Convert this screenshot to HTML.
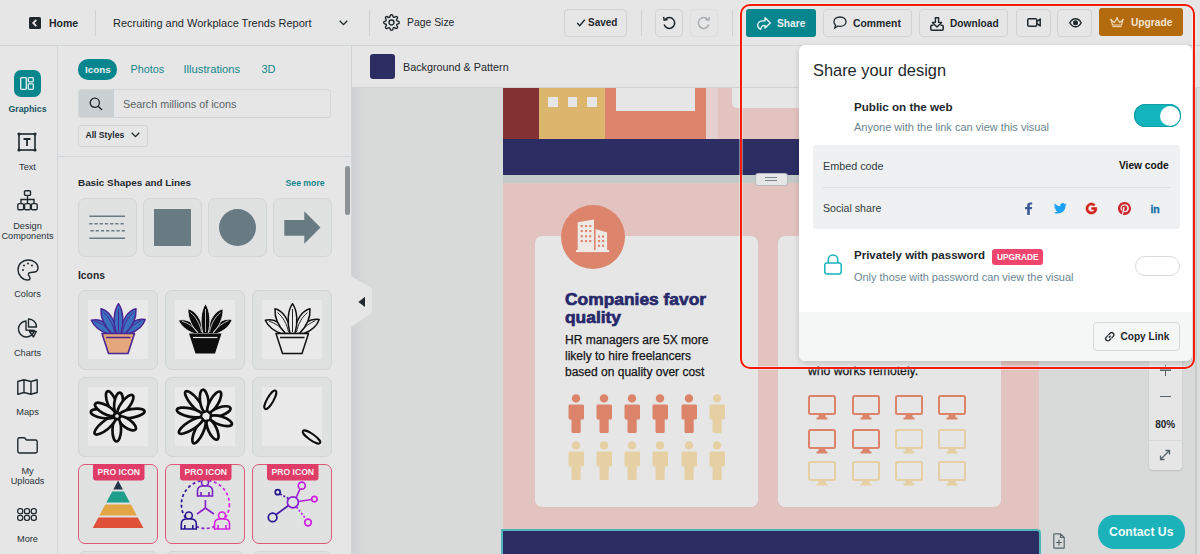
<!DOCTYPE html>
<html><head><meta charset="utf-8">
<style>
*{box-sizing:border-box;margin:0;padding:0}
html,body{width:1200px;height:554px;overflow:hidden;background:#e6e6e6;font-family:"Liberation Sans",sans-serif;color:#1e282d}
.a{position:absolute}
.t{position:absolute;white-space:nowrap;line-height:1}
.b{font-weight:700}
svg{position:absolute;overflow:visible}
.btn{position:absolute;border:1px solid #d0d3d5;border-radius:4px;background:#e6e6e6}
</style></head><body>

<!-- HEADER -->
<div class="a" style="left:0;top:0;width:1200px;height:46px;background:#e6e6e6;border-bottom:1px solid #cfd4d6"></div>
<svg style="left:29px;top:17px" width="12" height="12" viewBox="0 0 12 12"><rect width="12" height="12" rx="1.5" fill="#1e282d"/><path d="M7.3 2.8 L4.2 6 L7.3 9.2" stroke="#e6e6e6" stroke-width="1.8" fill="none"/></svg>
<div class="t b" style="left:49px;top:18px;font-size:10.5px">Home</div>
<div class="a" style="left:95px;top:10px;width:1px;height:26px;background:#d0d3d5"></div>
<div class="t" style="left:113px;top:18px;font-size:11px">Recruiting and Workplace Trends Report</div>
<svg style="left:339px;top:20px" width="9" height="6" viewBox="0 0 9 6"><path d="M0.7 0.7 L4.5 4.6 L8.3 0.7" stroke="#1e282d" stroke-width="1.3" fill="none"/></svg>
<div class="a" style="left:369px;top:10px;width:1px;height:26px;background:#d0d3d5"></div>
<svg style="left:383px;top:14px" width="17" height="17" viewBox="0 0 24 24"><path fill="none" stroke="#1e282d" stroke-width="2" d="M12 15.5a3.5 3.5 0 1 0 0-7 3.5 3.5 0 0 0 0 7z"/><path fill="none" stroke="#1e282d" stroke-width="2" d="M19.4 15a1.7 1.7 0 0 0 .3 1.8l.1.1a2 2 0 1 1-2.8 2.8l-.1-.1a1.7 1.7 0 0 0-1.8-.3 1.7 1.7 0 0 0-1 1.5V21a2 2 0 1 1-4 0v-.1a1.7 1.7 0 0 0-1.1-1.5 1.7 1.7 0 0 0-1.8.3l-.1.1a2 2 0 1 1-2.8-2.8l.1-.1a1.7 1.7 0 0 0 .3-1.8 1.7 1.7 0 0 0-1.5-1H3a2 2 0 1 1 0-4h.1a1.7 1.7 0 0 0 1.5-1.1 1.7 1.7 0 0 0-.3-1.8l-.1-.1a2 2 0 1 1 2.8-2.8l.1.1a1.7 1.7 0 0 0 1.8.3H9a1.7 1.7 0 0 0 1-1.5V3a2 2 0 1 1 4 0v.1a1.7 1.7 0 0 0 1 1.5 1.7 1.7 0 0 0 1.8-.3l.1-.1a2 2 0 1 1 2.8 2.8l-.1.1a1.7 1.7 0 0 0-.3 1.8V9a1.7 1.7 0 0 0 1.5 1H21a2 2 0 1 1 0 4h-.1a1.7 1.7 0 0 0-1.5 1z"/></svg>
<div class="t" style="left:407px;top:18px;font-size:10.4px">Page Size</div>

<div class="btn" style="left:564px;top:9px;width:63px;height:28px"></div>
<svg style="left:576px;top:19.3px" width="10" height="8" viewBox="0 0 10 9"><path d="M0.8 4.6 L3.6 7.6 L9.2 0.8" stroke="#1e282d" stroke-width="1.6" fill="none"/></svg>
<div class="t b" style="left:588px;top:18.4px;font-size:10px">Saved</div>
<div class="a" style="left:641px;top:10px;width:1px;height:26px;background:#d0d3d5"></div>
<div class="btn" style="left:655px;top:9px;width:28px;height:28px"></div>
<svg style="left:661px;top:15px" width="16" height="16" viewBox="0 0 16 16"><path d="M4.2 4.4 A5.4 5.4 0 1 1 3.1 9.6" stroke="#1e282d" stroke-width="1.5" fill="none"/><path d="M2.6 1.8 L3.2 5.2 L6.6 4.6" stroke="#1e282d" stroke-width="1.5" fill="none"/></svg>
<div class="btn" style="left:690px;top:9px;width:28px;height:28px;border-color:#dcdedf"></div>
<svg style="left:696px;top:15px" width="16" height="16" viewBox="0 0 16 16"><path d="M11.8 4.4 A5.4 5.4 0 1 0 12.9 9.6" stroke="#a9aeb0" stroke-width="1.5" fill="none"/><path d="M13.4 1.8 L12.8 5.2 L9.4 4.6" stroke="#a9aeb0" stroke-width="1.5" fill="none"/></svg>
<div class="a" style="left:732px;top:10px;width:1px;height:26px;background:#d0d3d5"></div>

<div class="a" style="left:746px;top:9px;width:70px;height:28px;background:#07878d;border-radius:3px"></div>
<svg style="left:757px;top:17px" width="14" height="13" viewBox="0 0 14 13"><path d="M8 0.6 L13.3 6 L8 11 V8.3 C6 8.3 4.9 9 4.3 10.4 L3.6 12.4 C1.6 11.4 0.7 9.8 0.7 8.3 C0.7 5.5 3 3.9 6 3.9 H8 Z" stroke="#eef6f6" stroke-width="1.3" fill="none" stroke-linejoin="round"/></svg>
<div class="t b" style="left:777px;top:19px;font-size:10.2px;color:#e9f2f2">Share</div>
<div class="btn" style="left:823px;top:9px;width:89px;height:28px"></div>
<svg style="left:833px;top:16px" width="14" height="13" viewBox="0 0 14 13"><path d="M7 1 C10.6 1 13 3.1 13 5.7 C13 8.3 10.6 10.3 7 10.3 C6.2 10.3 5.4 10.2 4.8 10 L1.8 12 L2.5 9 C1.5 8.2 1 7 1 5.7 C1 3.1 3.4 1 7 1Z" stroke="#1e282d" stroke-width="1.3" fill="none"/></svg>
<div class="t b" style="left:853px;top:19px;font-size:10.4px">Comment</div>
<div class="btn" style="left:919px;top:9px;width:89px;height:28px"></div>
<svg style="left:930px;top:16.5px" width="14" height="14" viewBox="0 0 14 14"><path d="M5.4 0.8 H8.6 V5.4 H11.6 L7 10 L2.4 5.4 H5.4 Z" stroke="#1e282d" stroke-width="1.4" fill="none" stroke-linejoin="round"/><path d="M3.4 8.2 H2 C1.3 8.2 0.8 8.7 0.8 9.4 V12 C0.8 12.7 1.3 13.2 2 13.2 H12 C12.7 13.2 13.2 12.7 13.2 12 V9.4 C13.2 8.7 12.7 8.2 12 8.2 H10.6" stroke="#1e282d" stroke-width="1.5" fill="none"/></svg>
<div class="t b" style="left:950px;top:19px;font-size:10.2px">Download</div>
<div class="btn" style="left:1016px;top:9px;width:35px;height:28px"></div>
<svg style="left:1026.5px;top:18px" width="14" height="9" viewBox="0 0 14 9"><rect x="0.75" y="0.75" width="9" height="7.5" rx="1.3" stroke="#1e282d" stroke-width="1.5" fill="none"/><path d="M9.8 3.6 L13.2 1 V8 L9.8 5.4" stroke="#1e282d" stroke-width="1.5" fill="none" stroke-linejoin="round"/></svg>
<div class="btn" style="left:1057px;top:9px;width:35px;height:28px"></div>
<svg style="left:1068.5px;top:17.5px" width="13" height="9.5" viewBox="0 0 13 9.5"><path d="M0.8 4.75 C2.5 1.6 4.5 0.7 6.5 0.7 C8.5 0.7 10.5 1.6 12.2 4.75 C10.5 7.9 8.5 8.8 6.5 8.8 C4.5 8.8 2.5 7.9 0.8 4.75Z" stroke="#1e282d" stroke-width="1.4" fill="none"/><circle cx="6.5" cy="4.75" r="2.5" fill="#1e282d"/></svg>
<div class="a" style="left:1099px;top:8px;width:84px;height:28px;background:#b36b0d;border-radius:3px"></div>
<svg style="left:1110px;top:17px" width="14" height="10.5" viewBox="0 0 14 10.5"><path d="M1.3 3 L4.3 5.6 L7 1.5 L9.7 5.6 L12.7 3 L11.5 8 H2.5 Z" stroke="#f1dcbc" stroke-width="1.1" fill="none" stroke-linejoin="round"/><circle cx="7" cy="1" r="0.9" fill="#f1dcbc"/><circle cx="1" cy="2.6" r="0.9" fill="#f1dcbc"/><circle cx="13" cy="2.6" r="0.9" fill="#f1dcbc"/><path d="M2.5 9.6 H11.5" stroke="#f1dcbc" stroke-width="1.1"/></svg>
<div class="t b" style="left:1131px;top:18px;font-size:10.2px;color:#f3e6d3">Upgrade</div>

<!-- LEFT RAIL -->
<div class="a" style="left:0;top:46px;width:58px;height:508px;background:#e6e6e6;border-right:1px solid #d3d6d8"></div>

<!-- RAIL ITEMS -->
<div class="a" style="left:13.5px;top:70.3px;width:27.5px;height:27px;background:#07878d;border-radius:7px"></div>
<svg style="left:20px;top:77px" width="14" height="13" viewBox="0 0 14 13"><rect x="0.7" y="0.7" width="5.6" height="11.6" rx="0.8" stroke="#e6f0f0" stroke-width="1.3" fill="none"/><rect x="8.3" y="0.7" width="5" height="4.2" rx="0.8" stroke="#e6f0f0" stroke-width="1.3" fill="none"/><rect x="8.3" y="6.9" width="5" height="5.4" rx="0.8" stroke="#e6f0f0" stroke-width="1.3" fill="none"/></svg>
<div class="t b" style="left:0;width:55px;text-align:center;top:104.8px;font-size:8.8px;color:#175663">Graphics</div>

<svg style="left:17px;top:132px" width="20" height="20" viewBox="0 0 20 20"><rect x="2" y="2" width="16" height="16" stroke="#1e282d" stroke-width="1.6" fill="none"/><circle cx="2" cy="2" r="1.6" fill="#1e282d"/><circle cx="18" cy="2" r="1.6" fill="#1e282d"/><circle cx="2" cy="18" r="1.6" fill="#1e282d"/><circle cx="18" cy="18" r="1.6" fill="#1e282d"/><path d="M6.5 7 H13.5 M10 7 V14" stroke="#1e282d" stroke-width="1.8" fill="none"/></svg>
<div class="t" style="left:0;width:55px;text-align:center;top:163px;font-size:9.2px;color:#2a3439">Text</div>

<svg style="left:17px;top:190px" width="21" height="21" viewBox="0 0 21 21"><rect x="7.5" y="0.8" width="6" height="4.6" rx="1" stroke="#1e282d" stroke-width="1.4" fill="none"/><path d="M10.5 5.4 V9.5 M4 13.5 V9.5 H17 V13.5 M10.5 9.5 V13.5" stroke="#1e282d" stroke-width="1.4" fill="none"/><rect x="0.8" y="13.6" width="5.8" height="6.2" rx="1.4" stroke="#1e282d" stroke-width="1.4" fill="none"/><rect x="7.6" y="13.6" width="5.8" height="6.2" rx="1.4" stroke="#1e282d" stroke-width="1.4" fill="none"/><rect x="14.4" y="13.6" width="5.8" height="6.2" rx="1.4" stroke="#1e282d" stroke-width="1.4" fill="none"/></svg>
<div class="t" style="left:0;width:55px;text-align:center;top:222px;font-size:9.2px;color:#2a3439">Design</div>
<div class="t" style="left:0;width:55px;text-align:center;top:232px;font-size:9.2px;color:#2a3439">Components</div>

<svg style="left:17px;top:259px" width="22" height="22" viewBox="0 0 22 22"><path d="M11 1 C5.5 1 1 5.3 1 10.8 C1 16.3 5.5 21 11 21 C12.3 21 13 20.2 13 19.2 C13 17.2 10.8 16.8 11.5 14.8 C12 13.5 13.5 13.3 15.5 13.3 C19 13.3 21 11.8 21 9 C21 4.5 16.5 1 11 1Z" stroke="#1e282d" stroke-width="1.4" fill="none"/><circle cx="6" cy="11" r="1" fill="#1e282d"/><circle cx="7" cy="6.5" r="1" fill="#1e282d"/><circle cx="11" cy="4.5" r="1" fill="#1e282d"/><circle cx="15" cy="6.5" r="1" fill="#1e282d"/></svg>
<div class="t" style="left:0;width:55px;text-align:center;top:290px;font-size:9.2px;color:#2a3439">Colors</div>

<svg style="left:17px;top:318px" width="21" height="21" viewBox="0 0 21 21"><path d="M9 3 A8 8 0 1 0 17.3 12.5 L9 12 Z" stroke="#1e282d" stroke-width="1.4" fill="none" stroke-linejoin="round"/><path d="M11.5 1 A8 8 0 0 1 19.5 9 H11.5 Z" stroke="#1e282d" stroke-width="1.4" fill="none" stroke-linejoin="round"/><path d="M12.5 13.5 H19.3 L16.5 19 Z" stroke="#1e282d" stroke-width="1.4" fill="none" stroke-linejoin="round"/></svg>
<div class="t" style="left:0;width:55px;text-align:center;top:349px;font-size:9.2px;color:#2a3439">Charts</div>

<svg style="left:17px;top:379px" width="21" height="16" viewBox="0 0 21 16"><path d="M0.8 2.5 L7 0.8 L14 2.5 L20.2 0.8 V13.5 L14 15.2 L7 13.5 L0.8 15.2 Z M7 0.8 V13.5 M14 2.5 V15.2" stroke="#1e282d" stroke-width="1.4" fill="none" stroke-linejoin="round"/></svg>
<div class="t" style="left:0;width:55px;text-align:center;top:408px;font-size:9.2px;color:#2a3439">Maps</div>

<svg style="left:17px;top:437px" width="21" height="17" viewBox="0 0 21 17"><path d="M0.8 2.5 C0.8 1.5 1.5 0.8 2.5 0.8 H7.5 L9.5 3 H18.5 C19.5 3 20.2 3.7 20.2 4.7 V14.3 C20.2 15.3 19.5 16 18.5 16 H2.5 C1.5 16 0.8 15.3 0.8 14.3 Z" stroke="#1e282d" stroke-width="1.4" fill="none" stroke-linejoin="round"/></svg>
<div class="t" style="left:0;width:55px;text-align:center;top:467px;font-size:9.2px;color:#2a3439">My</div>
<div class="t" style="left:0;width:55px;text-align:center;top:477px;font-size:9.2px;color:#2a3439">Uploads</div>

<svg style="left:17px;top:508px" width="20" height="13" viewBox="0 0 20 13"><g stroke="#1e282d" stroke-width="1.3" fill="none"><rect x="0.7" y="0.7" width="5" height="5" rx="2"/><rect x="7.5" y="0.7" width="5" height="5" rx="2"/><rect x="14.3" y="0.7" width="5" height="5" rx="2"/><rect x="0.7" y="7.3" width="5" height="5" rx="2"/><rect x="7.5" y="7.3" width="5" height="5" rx="2"/><rect x="14.3" y="7.3" width="5" height="5" rx="2"/></g></svg>
<div class="t" style="left:0;width:55px;text-align:center;top:535px;font-size:9.2px;color:#2a3439">More</div>

<!-- LEFT PANEL -->
<div class="a" style="left:58px;top:46px;width:294px;height:508px;background:#e6e6e6;border-right:1px solid #d3d6d8"></div>


<!-- PANEL CONTENT -->
<div class="a" style="left:78px;top:59px;width:39px;height:20.5px;background:#07878d;border-radius:10px"></div>
<div class="t b" style="left:85px;top:64.5px;font-size:9.8px;color:#e9f2f2">Icons</div>
<div class="t" style="left:130.5px;top:64px;font-size:10.8px;color:#13868b">Photos</div>
<div class="t" style="left:183.5px;top:64px;font-size:11.2px;color:#13868b">Illustrations</div>
<div class="t" style="left:261.5px;top:64px;font-size:11px;color:#13868b">3D</div>

<div class="a" style="left:78px;top:89px;width:253px;height:29px;border:1px solid #d2d6d7;border-radius:3px;background:#e6e6e6;overflow:hidden"><div class="a" style="left:0;top:0;width:34.5px;height:27px;background:#cbd0d2"></div></div>
<svg style="left:89px;top:97px" width="14" height="14" viewBox="0 0 14 14"><circle cx="5.8" cy="5.8" r="4.6" stroke="#1e282d" stroke-width="1.3" fill="none"/><path d="M9.2 9.2 L13 13" stroke="#1e282d" stroke-width="1.4"/></svg>
<div class="t" style="left:123px;top:98.5px;font-size:10.8px;color:#5a6468">Search millions of icons</div>

<div class="a" style="left:78px;top:124.5px;width:70px;height:22px;border:1px solid #d2d6d7;border-radius:3px"></div>
<div class="t b" style="left:85.5px;top:131px;font-size:8.6px">All Styles</div>
<svg style="left:131px;top:132px" width="9" height="6" viewBox="0 0 9 6"><path d="M0.7 0.7 L4.5 4.6 L8.3 0.7" stroke="#1e282d" stroke-width="1.3" fill="none"/></svg>

<div class="a" style="left:58px;top:156px;width:293px;height:1px;background:#d3d6d8"></div>

<div class="a" style="left:345px;top:166px;width:4.5px;height:48.5px;background:#8c9295;border-radius:3px"></div>

<div class="t b" style="left:78px;top:178px;font-size:9.9px">Basic Shapes and Lines</div>
<div class="t b" style="left:285.5px;top:178.5px;font-size:8.7px;color:#13868b">See more</div>

<div class="a" style="left:78px;top:198px;width:58.5px;height:58.5px;border:1px solid #d3d6d7;border-radius:7px;background:#e0e1e1"></div>
<div class="a" style="left:143px;top:198px;width:58.5px;height:58.5px;border:1px solid #d3d6d7;border-radius:7px;background:#e0e1e1"></div>
<div class="a" style="left:208px;top:198px;width:58.5px;height:58.5px;border:1px solid #d3d6d7;border-radius:7px;background:#e0e1e1"></div>
<div class="a" style="left:273px;top:198px;width:58.5px;height:58.5px;border:1px solid #d3d6d7;border-radius:7px;background:#e0e1e1"></div>
<svg style="left:89px;top:215px" width="37" height="25" viewBox="0 0 37 25"><g stroke="#687a82" stroke-width="1.6" fill="none"><path d="M0.3 1.2 H36"/><path d="M0.3 23.2 H36"/><path d="M0.3 8.7 H36" stroke-dasharray="3.2 2"/><path d="M1.5 15.7 H36" stroke-dasharray="3.2 2"/></g></svg>
<div class="a" style="left:154px;top:209px;width:36.5px;height:37px;background:#687a82"></div>
<div class="a" style="left:218.5px;top:209px;width:37px;height:37px;background:#687a82;border-radius:50%"></div>
<svg style="left:283.5px;top:211px" width="37" height="33" viewBox="0 0 37 33"><path d="M0.3 9 H20.3 V0.3 L36.5 16.5 L20.3 32.7 V24.7 H0.3 Z" fill="#687a82"/></svg>

<div class="t b" style="left:78px;top:271px;font-size:10.3px">Icons</div>


<!-- ICON TILES -->
<div class="a" style="left:78px;top:289.7px;width:80px;height:80px;border:1px solid #d0d4d5;border-radius:7px;background:#dfe0e0"></div><div class="a" style="left:88px;top:299.7px;width:60px;height:59px;background:#e9e9e9"></div><svg style="left:78px;top:289.7px" width="80" height="80" viewBox="0 0 80 80"><g fill="#3b70bf" stroke="#4a2594" stroke-width="1.5" stroke-linejoin="round"><path d="M13.3 30.3 C21.5 28 30.5 33 36 43.5 H29 C22 41 16 36 13.3 30.3 Z"/><path d="M67.2 29.6 C59 27.5 50 33 45 43.5 H52 C59 41 65 36 67.2 29.6 Z"/><path d="M23 18.8 C30.5 20.5 37 29 39 43.5 H33.5 C27 37 22.5 28 23 18.8 Z"/><path d="M58 18.8 C50.5 20.5 44 29 42 43.5 H47.5 C54 37 58.5 28 58 18.8 Z"/><path d="M40.5 13.7 C45.5 21 46 33 43 43.5 H38 C35 33 35.5 21 40.5 13.7 Z"/></g><g stroke="#4a2594" stroke-width="1" fill="none"><path d="M40.5 19 V42"/><path d="M25.5 22.5 C31 27 35 34 36.5 42"/><path d="M55.5 22.5 C50 27 46 34 44.5 42"/><path d="M17 31.2 C23 33 29 37 32.5 42"/><path d="M63.5 30.5 C58 33 52 37 48.5 42"/></g><g fill="#e3a77b" stroke="#4a2594" stroke-width="1.6" stroke-linejoin="round"><path d="M24 43.5 H56.5 L50 63.5 H30.5 Z"/></g><path d="M28 47.5 H52.5" stroke="#4a2594" stroke-width="1.5"/></svg>
<div class="a" style="left:164.7px;top:289.7px;width:80px;height:80px;border:1px solid #d0d4d5;border-radius:7px;background:#dfe0e0"></div><div class="a" style="left:174.7px;top:299.7px;width:60px;height:59px;background:#e9e9e9"></div><svg style="left:164.7px;top:289.7px" width="80" height="80" viewBox="0 0 80 80"><g fill="#0d0d0d" stroke="#ebebeb" stroke-width="0.9" stroke-linejoin="round"><path d="M13.3 30.3 C21.5 28 30.5 33 36 43.5 H29 C22 41 16 36 13.3 30.3 Z"/><path d="M67.2 29.6 C59 27.5 50 33 45 43.5 H52 C59 41 65 36 67.2 29.6 Z"/><path d="M23 18.8 C30.5 20.5 37 29 39 43.5 H33.5 C27 37 22.5 28 23 18.8 Z"/><path d="M58 18.8 C50.5 20.5 44 29 42 43.5 H47.5 C54 37 58.5 28 58 18.8 Z"/><path d="M40.5 13.7 C45.5 21 46 33 43 43.5 H38 C35 33 35.5 21 40.5 13.7 Z"/></g><g fill="#0d0d0d"><path d="M24 43.5 H56.5 L50 63.5 H30.5 Z"/></g><path d="M28 47.5 H52.5" stroke="#e6e6e6" stroke-width="1.2"/><g stroke="#e6e6e6" stroke-width="0.8" fill="none"><path d="M40.5 19 V42"/><path d="M25.5 22.5 C31 27 35 34 36.5 42"/><path d="M55.5 22.5 C50 27 46 34 44.5 42"/><path d="M17 31.2 C23 33 29 37 32.5 42"/><path d="M63.5 30.5 C58 33 52 37 48.5 42"/></g></svg>
<div class="a" style="left:251.6px;top:289.7px;width:80px;height:80px;border:1px solid #d0d4d5;border-radius:7px;background:#dfe0e0"></div><div class="a" style="left:261.6px;top:299.7px;width:60px;height:59px;background:#e9e9e9"></div><svg style="left:251.6px;top:289.7px" width="80" height="80" viewBox="0 0 80 80"><g fill="#ebebeb" stroke="#111" stroke-width="1.5" stroke-linejoin="round"><path d="M13.3 30.3 C21.5 28 30.5 33 36 43.5 H29 C22 41 16 36 13.3 30.3 Z"/><path d="M67.2 29.6 C59 27.5 50 33 45 43.5 H52 C59 41 65 36 67.2 29.6 Z"/><path d="M23 18.8 C30.5 20.5 37 29 39 43.5 H33.5 C27 37 22.5 28 23 18.8 Z"/><path d="M58 18.8 C50.5 20.5 44 29 42 43.5 H47.5 C54 37 58.5 28 58 18.8 Z"/><path d="M40.5 13.7 C45.5 21 46 33 43 43.5 H38 C35 33 35.5 21 40.5 13.7 Z"/></g><g fill="#ebebeb" stroke="#111" stroke-width="1.5" stroke-linejoin="round"><path d="M24 43.5 H56.5 L50 63.5 H30.5 Z"/></g><path d="M28 47.5 H52.5" stroke="#111" stroke-width="1.5"/><g stroke="#111" stroke-width="0.9" fill="none"><path d="M40.5 19 V42"/><path d="M25.5 22.5 C31 27 35 34 36.5 42"/><path d="M55.5 22.5 C50 27 46 34 44.5 42"/><path d="M17 31.2 C23 33 29 37 32.5 42"/><path d="M63.5 30.5 C58 33 52 37 48.5 42"/></g></svg>
<div class="a" style="left:78px;top:377.2px;width:80px;height:80px;border:1px solid #d0d4d5;border-radius:7px;background:#dfe0e0"></div><div class="a" style="left:88px;top:387.2px;width:60px;height:59px;background:#e9e9e9"></div><svg style="left:78px;top:377.2px" width="80" height="80" viewBox="0 0 80 80"><ellipse cx="39" cy="24.75" rx="4.3" ry="12.25" transform="rotate(-21 39 39)" fill="#ebebeb" stroke="#0d0d0d" stroke-width="2.7"/><ellipse cx="39" cy="26.25" rx="4.3" ry="10.75" transform="rotate(7 39 39)" fill="#ebebeb" stroke="#0d0d0d" stroke-width="2.7"/><ellipse cx="39" cy="25.00" rx="4.3" ry="12.00" transform="rotate(37 39 39)" fill="#ebebeb" stroke="#0d0d0d" stroke-width="2.7"/><ellipse cx="39" cy="24.00" rx="4.3" ry="13.00" transform="rotate(80 39 39)" fill="#ebebeb" stroke="#0d0d0d" stroke-width="2.7"/><ellipse cx="39" cy="26.50" rx="4.3" ry="10.50" transform="rotate(126 39 39)" fill="#ebebeb" stroke="#0d0d0d" stroke-width="2.7"/><ellipse cx="39" cy="25.25" rx="4.3" ry="11.75" transform="rotate(181 39 39)" fill="#ebebeb" stroke="#0d0d0d" stroke-width="2.7"/><ellipse cx="39" cy="23.75" rx="4.3" ry="13.25" transform="rotate(231 39 39)" fill="#ebebeb" stroke="#0d0d0d" stroke-width="2.7"/><ellipse cx="39" cy="24.75" rx="4.3" ry="12.25" transform="rotate(279 39 39)" fill="#ebebeb" stroke="#0d0d0d" stroke-width="2.7"/><ellipse cx="39" cy="25.50" rx="4.3" ry="11.50" transform="rotate(299 39 39)" fill="#ebebeb" stroke="#0d0d0d" stroke-width="2.7"/><circle cx="39" cy="39" r="3.2" fill="#ebebeb" stroke="#0d0d0d" stroke-width="2.7"/></svg>
<div class="a" style="left:164.7px;top:377.2px;width:80px;height:80px;border:1px solid #d0d4d5;border-radius:7px;background:#dfe0e0"></div><div class="a" style="left:174.7px;top:387.2px;width:60px;height:59px;background:#e9e9e9"></div><svg style="left:164.7px;top:377.2px" width="80" height="80" viewBox="0 0 80 80"><ellipse cx="41.2" cy="21.00" rx="4.2" ry="14.00" transform="rotate(-40 41.2 39)" fill="#ebebeb" stroke="#0d0d0d" stroke-width="2.7"/><ellipse cx="41.2" cy="23.75" rx="4.2" ry="11.25" transform="rotate(-7.5 41.2 39)" fill="#ebebeb" stroke="#0d0d0d" stroke-width="2.7"/><ellipse cx="41.2" cy="23.00" rx="4.2" ry="12.00" transform="rotate(30 41.2 39)" fill="#ebebeb" stroke="#0d0d0d" stroke-width="2.7"/><ellipse cx="41.2" cy="24.25" rx="4.2" ry="10.75" transform="rotate(72 41.2 39)" fill="#ebebeb" stroke="#0d0d0d" stroke-width="2.7"/><ellipse cx="41.2" cy="23.50" rx="4.2" ry="11.50" transform="rotate(108 41.2 39)" fill="#ebebeb" stroke="#0d0d0d" stroke-width="2.7"/><ellipse cx="41.2" cy="24.00" rx="4.2" ry="11.00" transform="rotate(155 41.2 39)" fill="#ebebeb" stroke="#0d0d0d" stroke-width="2.7"/><ellipse cx="41.2" cy="22.00" rx="4.2" ry="13.00" transform="rotate(205 41.2 39)" fill="#ebebeb" stroke="#0d0d0d" stroke-width="2.7"/><ellipse cx="41.2" cy="21.00" rx="4.2" ry="14.00" transform="rotate(238 41.2 39)" fill="#ebebeb" stroke="#0d0d0d" stroke-width="2.7"/><ellipse cx="41.2" cy="22.00" rx="4.2" ry="13.00" transform="rotate(282 41.2 39)" fill="#ebebeb" stroke="#0d0d0d" stroke-width="2.7"/><path d="M37 36 L42 34 L46 37.5 L45 43 L39.5 44 L36 40 Z" fill="#ebebeb" stroke="#0d0d0d" stroke-width="2.2"/></svg>
<div class="a" style="left:251.6px;top:377.2px;width:80px;height:80px;border:1px solid #d0d4d5;border-radius:7px;background:#dfe0e0"></div><div class="a" style="left:261.6px;top:387.2px;width:60px;height:59px;background:#e9e9e9"></div><svg style="left:251.6px;top:377.2px" width="80" height="80" viewBox="0 0 80 80"><ellipse cx="18.3" cy="22.8" rx="3.2" ry="10.5" transform="rotate(30 18.3 22.8)" fill="none" stroke="#0d0d0d" stroke-width="2"/><ellipse cx="59.5" cy="60" rx="3" ry="10.5" transform="rotate(-55 59.5 60)" fill="none" stroke="#0d0d0d" stroke-width="2"/></svg>
<div class="a" style="left:78px;top:463.6px;width:80px;height:80px;border:1px solid #e0577c;border-radius:7px;background:#e0e1e1"></div><svg style="left:78px;top:463.6px" width="80" height="80" viewBox="0 0 80 80"><path d="M40.10 16.4 H40.10 L44.90 25.4 H35.30 Z" fill="#253548"/><path d="M34.24 27.4 H45.96 L51.83 38.4 H28.37 Z" fill="#1f9e8c"/><path d="M27.31 40.4 H52.89 L58.76 51.4 H21.45 Z" fill="#e3a645"/><path d="M20.38 53.4 H59.82 L65.42 63.9 H14.78 Z" fill="#de5038"/><path d="M15 0 H66.5 V13.5 A3 3 0 0 1 63.5 16.5 H18 A3 3 0 0 1 15 13.5 Z" fill="#df3d67"/><text x="40.8" y="11.3" text-anchor="middle" font-family="Liberation Sans" font-weight="700" font-size="8.6" fill="#fbeef1">PRO ICON</text></svg>
<div class="a" style="left:164.7px;top:463.6px;width:80px;height:80px;border:1px solid #e0577c;border-radius:7px;background:#e0e1e1"></div><svg style="left:164.7px;top:463.6px" width="80" height="80" viewBox="0 0 80 80"><defs><linearGradient id="g1" x1="0" y1="0" x2="1" y2="0"><stop offset="0" stop-color="#20148f"/><stop offset="0.5" stop-color="#8f22d3"/><stop offset="1" stop-color="#e01ee6"/></linearGradient></defs><circle cx="40.4" cy="40.4" r="24" fill="none" stroke="url(#g1)" stroke-width="1.7" stroke-dasharray="3 2.5"/><path d="M40.4 36 V44 L32 50 M40.4 44 L48.8 50" stroke="#8a22c8" stroke-width="1.7" fill="none"/><g stroke="#7a1fc4" stroke-width="1.6" fill="#e0e1e1"><circle cx="40" cy="18.5" r="3.5"/><path d="M32.5 32 V27 C32.5 23.5 35 22 38 22 H42 C45 22 47.5 23.5 47.5 27 V32 Z"/><path d="M36 28 V32 M44 28 V32" /></g><g stroke="#2a1592" stroke-width="1.6" fill="#e0e1e1"><circle cx="23.8" cy="51.5" r="3.5"/><path d="M16.3 65 V60 C16.3 56.5 18.8 55 21.8 55 H25.8 C28.8 55 31.3 56.5 31.3 60 V65 Z"/><path d="M19.8 61 V65 M27.8 61 V65" /></g><g stroke="#d41fe0" stroke-width="1.6" fill="#e0e1e1"><circle cx="57" cy="51.5" r="3.5"/><path d="M49.5 65 V60 C49.5 56.5 52 55 55 55 H59 C62 55 64.5 56.5 64.5 60 V65 Z"/><path d="M53 61 V65 M61 61 V65" /></g><path d="M15 0 H66.5 V13.5 A3 3 0 0 1 63.5 16.5 H18 A3 3 0 0 1 15 13.5 Z" fill="#df3d67"/><text x="40.8" y="11.3" text-anchor="middle" font-family="Liberation Sans" font-weight="700" font-size="8.6" fill="#fbeef1">PRO ICON</text></svg>
<div class="a" style="left:251.6px;top:463.6px;width:80px;height:80px;border:1px solid #e0577c;border-radius:7px;background:#e0e1e1"></div><svg style="left:251.6px;top:463.6px" width="80" height="80" viewBox="0 0 80 80"><g fill="#e0e1e1" stroke-width="1.7"><path d="M36.5 41.5 L23.5 51" stroke="#4a1aa8"/><path d="M44 34 L48 25" stroke="#a21ed6"/><path d="M46.5 37.5 L59.6 35.5" stroke="#b81edc"/><path d="M44.5 43 L54 55" stroke="#b01ee0" stroke-dasharray="2 1.8"/><path d="M36.5 34.5 L28 30" stroke="#4a1aa8" stroke-dasharray="2 1.8"/><circle cx="40.9" cy="38.3" r="5.5" stroke="#8a1fd0"/><circle cx="49.8" cy="21.7" r="3.5" stroke="#c21ee0"/><circle cx="62.4" cy="35.1" r="2.7" stroke="#d01ee2"/><circle cx="56" cy="58.5" r="3.3" stroke="#d01ee2"/><circle cx="20.6" cy="53.4" r="4.3" stroke="#22178f"/><circle cx="25.7" cy="28.2" r="2.5" stroke="#22178f"/></g><path d="M15 0 H66.5 V13.5 A3 3 0 0 1 63.5 16.5 H18 A3 3 0 0 1 15 13.5 Z" fill="#df3d67"/><text x="40.8" y="11.3" text-anchor="middle" font-family="Liberation Sans" font-weight="700" font-size="8.6" fill="#fbeef1">PRO ICON</text></svg>
<div class="a" style="left:78px;top:551px;width:80px;height:80px;border:1px solid #d0d4d5;border-radius:7px;background:#dfe0e0"></div><div class="a" style="left:88px;top:561px;width:60px;height:59px;background:#e9e9e9"></div>
<div class="a" style="left:164.7px;top:551px;width:80px;height:80px;border:1px solid #d0d4d5;border-radius:7px;background:#dfe0e0"></div><div class="a" style="left:174.7px;top:561px;width:60px;height:59px;background:#e9e9e9"></div>
<div class="a" style="left:251.6px;top:551px;width:80px;height:80px;border:1px solid #d0d4d5;border-radius:7px;background:#dfe0e0"></div><div class="a" style="left:261.6px;top:561px;width:60px;height:59px;background:#e9e9e9"></div>

<!-- CANVAS AREA -->
<div class="a" style="left:352px;top:46px;width:848px;height:508px;background:#d8d9d9"></div>
<div class="a" style="left:352px;top:46px;width:848px;height:42px;background:#e6e6e6;border-bottom:1px solid #d0d3d5"></div>
<div class="a" style="left:370px;top:54px;width:25px;height:25px;background:#2c2d62;border-radius:3px"></div>
<div class="t" style="left:403px;top:62px;font-size:10.8px">Background &amp; Pattern</div>


<!-- CANVAS DESIGN -->
<div class="a" style="left:352px;top:88px;width:14px;height:466px;background:linear-gradient(90deg,#cfd1d2,#d8d9d9)"></div>
<div class="a" style="left:503px;top:88px;width:536px;height:442px;background:#e2c3c0;overflow:hidden">
  <div class="a" style="left:0;top:0;width:36px;height:51px;background:#843234"></div>
  <div class="a" style="left:36px;top:0;width:66px;height:51px;background:#ddb66e"></div>
  <div class="a" style="left:45px;top:9px;width:9.5px;height:9.5px;background:#e6e6e6"></div>
  <div class="a" style="left:64.5px;top:9px;width:9.5px;height:9.5px;background:#e6e6e6"></div>
  <div class="a" style="left:84px;top:9px;width:9.5px;height:9.5px;background:#e6e6e6"></div>
  <div class="a" style="left:102px;top:0;width:100.5px;height:51px;background:#dc846c"></div>
  <div class="a" style="left:112.75px;top:0;width:78.75px;height:23px;background:#e6e6e6"></div>
  <div class="a" style="left:202.5px;top:0;width:12.5px;height:51px;background:#e6d0cf"></div>
  <div class="a" style="left:229px;top:-6px;width:300px;height:26px;background:#e6e6e6;border-radius:5px"></div>
  <div class="a" style="left:0;top:51px;width:536px;height:35.5px;background:#2c2d62"></div>
  <div class="a" style="left:0;top:86.5px;width:536px;height:8.5px;background:#c4c9ca"></div>
  <div class="a" style="left:32px;top:147.5px;width:223px;height:271px;background:#e6e6e6;border-radius:7px"></div>
  <div class="a" style="left:275px;top:147.5px;width:223px;height:271px;background:#e6e6e6;border-radius:7px"></div>
  <div class="a" style="left:57.5px;top:116.5px;width:64px;height:64px;background:#dc846c;border-radius:50%"></div>
</div>
<svg style="left:575px;top:218px" width="36" height="36" viewBox="0 0 36 36"><g fill="#efe9e6"><path d="M2.7 4.3 L19 1.6 V32.4 H2.7 Z"/><path d="M20.6 11.1 L32.1 14.5 V32.4 H20.6 Z"/><rect x="1" y="32" width="33.2" height="2.1"/></g><g fill="#dc846c"><rect x="5.7" y="7" width="2.1" height="2.1"/><rect x="5.7" y="12" width="2.1" height="2.1"/><rect x="5.7" y="17.2" width="2.1" height="2.1"/><rect x="5.7" y="22" width="2.1" height="2.1"/><rect x="10" y="7" width="2.1" height="2.1"/><rect x="10" y="12" width="2.1" height="2.1"/><rect x="10" y="17.2" width="2.1" height="2.1"/><rect x="10" y="22" width="2.1" height="2.1"/><rect x="14.2" y="7" width="2.1" height="2.1"/><rect x="14.2" y="12" width="2.1" height="2.1"/><rect x="14.2" y="17.2" width="2.1" height="2.1"/><rect x="14.2" y="22" width="2.1" height="2.1"/><rect x="23" y="17.5" width="2.1" height="2.1"/><rect x="23" y="22" width="2.1" height="2.1"/><rect x="23" y="26.7" width="2.1" height="2.1"/><rect x="27" y="17.5" width="2.1" height="2.1"/><rect x="27" y="22" width="2.1" height="2.1"/><rect x="27" y="26.7" width="2.1" height="2.1"/></g></svg>
<div class="t b" style="left:565px;top:290px;font-size:17.4px;color:#27296a;line-height:18px;-webkit-text-stroke:0.7px #27296a">Companies favor<br>quality</div>
<div class="t" style="left:565px;top:333px;font-size:12px;color:#151518;line-height:15.8px;-webkit-text-stroke:0.25px #151518">HR managers are 5X more<br>likely to hire freelancers<br>based on quality over cost</div>
<div class="t" style="left:808px;top:365px;font-size:12.2px;color:#151518;-webkit-text-stroke:0.25px #151518">who works remotely.</div>
<svg style="left:567.5px;top:393.5px" width="17" height="40" viewBox="0 0 17 40"><circle cx="8" cy="4.4" r="4.2" fill="#dc846a"/><path d="M2 10.5 H14.5 C15.3 10.5 16 11.2 16 12 V24 C16 24.8 15.3 25.5 14.5 25.5 H12.7 V37.6 C12.7 38.4 12 39.1 11.2 39.1 H5 C4.2 39.1 3.5 38.4 3.5 37.6 V25.5 H2 C1.2 25.5 0.5 24.8 0.5 24 V12 C0.5 11.2 1.2 10.5 2 10.5 Z" fill="#dc846a"/></svg><svg style="left:595.8px;top:393.5px" width="17" height="40" viewBox="0 0 17 40"><circle cx="8" cy="4.4" r="4.2" fill="#dc846a"/><path d="M2 10.5 H14.5 C15.3 10.5 16 11.2 16 12 V24 C16 24.8 15.3 25.5 14.5 25.5 H12.7 V37.6 C12.7 38.4 12 39.1 11.2 39.1 H5 C4.2 39.1 3.5 38.4 3.5 37.6 V25.5 H2 C1.2 25.5 0.5 24.8 0.5 24 V12 C0.5 11.2 1.2 10.5 2 10.5 Z" fill="#dc846a"/></svg><svg style="left:624px;top:393.5px" width="17" height="40" viewBox="0 0 17 40"><circle cx="8" cy="4.4" r="4.2" fill="#dc846a"/><path d="M2 10.5 H14.5 C15.3 10.5 16 11.2 16 12 V24 C16 24.8 15.3 25.5 14.5 25.5 H12.7 V37.6 C12.7 38.4 12 39.1 11.2 39.1 H5 C4.2 39.1 3.5 38.4 3.5 37.6 V25.5 H2 C1.2 25.5 0.5 24.8 0.5 24 V12 C0.5 11.2 1.2 10.5 2 10.5 Z" fill="#dc846a"/></svg><svg style="left:652.4px;top:393.5px" width="17" height="40" viewBox="0 0 17 40"><circle cx="8" cy="4.4" r="4.2" fill="#dc846a"/><path d="M2 10.5 H14.5 C15.3 10.5 16 11.2 16 12 V24 C16 24.8 15.3 25.5 14.5 25.5 H12.7 V37.6 C12.7 38.4 12 39.1 11.2 39.1 H5 C4.2 39.1 3.5 38.4 3.5 37.6 V25.5 H2 C1.2 25.5 0.5 24.8 0.5 24 V12 C0.5 11.2 1.2 10.5 2 10.5 Z" fill="#dc846a"/></svg><svg style="left:680.7px;top:393.5px" width="17" height="40" viewBox="0 0 17 40"><circle cx="8" cy="4.4" r="4.2" fill="#dc846a"/><path d="M2 10.5 H14.5 C15.3 10.5 16 11.2 16 12 V24 C16 24.8 15.3 25.5 14.5 25.5 H12.7 V37.6 C12.7 38.4 12 39.1 11.2 39.1 H5 C4.2 39.1 3.5 38.4 3.5 37.6 V25.5 H2 C1.2 25.5 0.5 24.8 0.5 24 V12 C0.5 11.2 1.2 10.5 2 10.5 Z" fill="#dc846a"/></svg><svg style="left:709px;top:393.5px" width="17" height="40" viewBox="0 0 17 40"><circle cx="8" cy="4.4" r="4.2" fill="#e5cfa3"/><path d="M2 10.5 H14.5 C15.3 10.5 16 11.2 16 12 V24 C16 24.8 15.3 25.5 14.5 25.5 H12.7 V37.6 C12.7 38.4 12 39.1 11.2 39.1 H5 C4.2 39.1 3.5 38.4 3.5 37.6 V25.5 H2 C1.2 25.5 0.5 24.8 0.5 24 V12 C0.5 11.2 1.2 10.5 2 10.5 Z" fill="#e5cfa3"/></svg><svg style="left:567.5px;top:440.5px" width="17" height="40" viewBox="0 0 17 40"><circle cx="8" cy="4.4" r="4.2" fill="#e5cfa3"/><path d="M2 10.5 H14.5 C15.3 10.5 16 11.2 16 12 V24 C16 24.8 15.3 25.5 14.5 25.5 H12.7 V37.6 C12.7 38.4 12 39.1 11.2 39.1 H5 C4.2 39.1 3.5 38.4 3.5 37.6 V25.5 H2 C1.2 25.5 0.5 24.8 0.5 24 V12 C0.5 11.2 1.2 10.5 2 10.5 Z" fill="#e5cfa3"/></svg><svg style="left:595.8px;top:440.5px" width="17" height="40" viewBox="0 0 17 40"><circle cx="8" cy="4.4" r="4.2" fill="#e5cfa3"/><path d="M2 10.5 H14.5 C15.3 10.5 16 11.2 16 12 V24 C16 24.8 15.3 25.5 14.5 25.5 H12.7 V37.6 C12.7 38.4 12 39.1 11.2 39.1 H5 C4.2 39.1 3.5 38.4 3.5 37.6 V25.5 H2 C1.2 25.5 0.5 24.8 0.5 24 V12 C0.5 11.2 1.2 10.5 2 10.5 Z" fill="#e5cfa3"/></svg><svg style="left:624px;top:440.5px" width="17" height="40" viewBox="0 0 17 40"><circle cx="8" cy="4.4" r="4.2" fill="#e5cfa3"/><path d="M2 10.5 H14.5 C15.3 10.5 16 11.2 16 12 V24 C16 24.8 15.3 25.5 14.5 25.5 H12.7 V37.6 C12.7 38.4 12 39.1 11.2 39.1 H5 C4.2 39.1 3.5 38.4 3.5 37.6 V25.5 H2 C1.2 25.5 0.5 24.8 0.5 24 V12 C0.5 11.2 1.2 10.5 2 10.5 Z" fill="#e5cfa3"/></svg><svg style="left:652.4px;top:440.5px" width="17" height="40" viewBox="0 0 17 40"><circle cx="8" cy="4.4" r="4.2" fill="#e5cfa3"/><path d="M2 10.5 H14.5 C15.3 10.5 16 11.2 16 12 V24 C16 24.8 15.3 25.5 14.5 25.5 H12.7 V37.6 C12.7 38.4 12 39.1 11.2 39.1 H5 C4.2 39.1 3.5 38.4 3.5 37.6 V25.5 H2 C1.2 25.5 0.5 24.8 0.5 24 V12 C0.5 11.2 1.2 10.5 2 10.5 Z" fill="#e5cfa3"/></svg><svg style="left:680.7px;top:440.5px" width="17" height="40" viewBox="0 0 17 40"><circle cx="8" cy="4.4" r="4.2" fill="#e5cfa3"/><path d="M2 10.5 H14.5 C15.3 10.5 16 11.2 16 12 V24 C16 24.8 15.3 25.5 14.5 25.5 H12.7 V37.6 C12.7 38.4 12 39.1 11.2 39.1 H5 C4.2 39.1 3.5 38.4 3.5 37.6 V25.5 H2 C1.2 25.5 0.5 24.8 0.5 24 V12 C0.5 11.2 1.2 10.5 2 10.5 Z" fill="#e5cfa3"/></svg><svg style="left:709px;top:440.5px" width="17" height="40" viewBox="0 0 17 40"><circle cx="8" cy="4.4" r="4.2" fill="#e5cfa3"/><path d="M2 10.5 H14.5 C15.3 10.5 16 11.2 16 12 V24 C16 24.8 15.3 25.5 14.5 25.5 H12.7 V37.6 C12.7 38.4 12 39.1 11.2 39.1 H5 C4.2 39.1 3.5 38.4 3.5 37.6 V25.5 H2 C1.2 25.5 0.5 24.8 0.5 24 V12 C0.5 11.2 1.2 10.5 2 10.5 Z" fill="#e5cfa3"/></svg><svg style="left:808.3px;top:394.8px" width="28" height="25" viewBox="0 0 28 25"><rect x="1" y="1" width="26" height="18" rx="1.5" fill="none" stroke="#dc846a" stroke-width="2"/><path d="M11 19 H17 L18 23 H10 Z" fill="#dc846a"/><rect x="8.5" y="22.5" width="11" height="2" fill="#dc846a"/></svg><svg style="left:851.5px;top:394.8px" width="28" height="25" viewBox="0 0 28 25"><rect x="1" y="1" width="26" height="18" rx="1.5" fill="none" stroke="#dc846a" stroke-width="2"/><path d="M11 19 H17 L18 23 H10 Z" fill="#dc846a"/><rect x="8.5" y="22.5" width="11" height="2" fill="#dc846a"/></svg><svg style="left:894.7px;top:394.8px" width="28" height="25" viewBox="0 0 28 25"><rect x="1" y="1" width="26" height="18" rx="1.5" fill="none" stroke="#dc846a" stroke-width="2"/><path d="M11 19 H17 L18 23 H10 Z" fill="#dc846a"/><rect x="8.5" y="22.5" width="11" height="2" fill="#dc846a"/></svg><svg style="left:937.9px;top:394.8px" width="28" height="25" viewBox="0 0 28 25"><rect x="1" y="1" width="26" height="18" rx="1.5" fill="none" stroke="#dc846a" stroke-width="2"/><path d="M11 19 H17 L18 23 H10 Z" fill="#dc846a"/><rect x="8.5" y="22.5" width="11" height="2" fill="#dc846a"/></svg><svg style="left:808.3px;top:428.8px" width="28" height="25" viewBox="0 0 28 25"><rect x="1" y="1" width="26" height="18" rx="1.5" fill="none" stroke="#dc846a" stroke-width="2"/><path d="M11 19 H17 L18 23 H10 Z" fill="#dc846a"/><rect x="8.5" y="22.5" width="11" height="2" fill="#dc846a"/></svg><svg style="left:851.5px;top:428.8px" width="28" height="25" viewBox="0 0 28 25"><rect x="1" y="1" width="26" height="18" rx="1.5" fill="none" stroke="#dc846a" stroke-width="2"/><path d="M11 19 H17 L18 23 H10 Z" fill="#dc846a"/><rect x="8.5" y="22.5" width="11" height="2" fill="#dc846a"/></svg><svg style="left:894.7px;top:428.8px" width="28" height="25" viewBox="0 0 28 25"><rect x="1" y="1" width="26" height="18" rx="1.5" fill="none" stroke="#e5cfa3" stroke-width="2"/><path d="M11 19 H17 L18 23 H10 Z" fill="#e5cfa3"/><rect x="8.5" y="22.5" width="11" height="2" fill="#e5cfa3"/></svg><svg style="left:937.9px;top:428.8px" width="28" height="25" viewBox="0 0 28 25"><rect x="1" y="1" width="26" height="18" rx="1.5" fill="none" stroke="#e5cfa3" stroke-width="2"/><path d="M11 19 H17 L18 23 H10 Z" fill="#e5cfa3"/><rect x="8.5" y="22.5" width="11" height="2" fill="#e5cfa3"/></svg><svg style="left:808.3px;top:460.8px" width="28" height="25" viewBox="0 0 28 25"><rect x="1" y="1" width="26" height="18" rx="1.5" fill="none" stroke="#e5cfa3" stroke-width="2"/><path d="M11 19 H17 L18 23 H10 Z" fill="#e5cfa3"/><rect x="8.5" y="22.5" width="11" height="2" fill="#e5cfa3"/></svg><svg style="left:851.5px;top:460.8px" width="28" height="25" viewBox="0 0 28 25"><rect x="1" y="1" width="26" height="18" rx="1.5" fill="none" stroke="#e5cfa3" stroke-width="2"/><path d="M11 19 H17 L18 23 H10 Z" fill="#e5cfa3"/><rect x="8.5" y="22.5" width="11" height="2" fill="#e5cfa3"/></svg><svg style="left:894.7px;top:460.8px" width="28" height="25" viewBox="0 0 28 25"><rect x="1" y="1" width="26" height="18" rx="1.5" fill="none" stroke="#e5cfa3" stroke-width="2"/><path d="M11 19 H17 L18 23 H10 Z" fill="#e5cfa3"/><rect x="8.5" y="22.5" width="11" height="2" fill="#e5cfa3"/></svg><svg style="left:937.9px;top:460.8px" width="28" height="25" viewBox="0 0 28 25"><rect x="1" y="1" width="26" height="18" rx="1.5" fill="none" stroke="#e5cfa3" stroke-width="2"/><path d="M11 19 H17 L18 23 H10 Z" fill="#e5cfa3"/><rect x="8.5" y="22.5" width="11" height="2" fill="#e5cfa3"/></svg>
<div class="a" style="left:501px;top:529px;width:540px;height:30px;background:#2c2d62;border:2.5px solid #4fb5bb;border-radius:0 4px 0 0"></div>
<div class="a" style="left:754.5px;top:172.5px;width:33px;height:13px;background:#e6e6e6;border:1px solid #b5bbbe;border-radius:3px"></div>
<div class="a" style="left:765px;top:177px;width:12px;height:1.2px;background:#7d878b"></div>
<div class="a" style="left:765px;top:180px;width:12px;height:1.2px;background:#7d878b"></div>


<div class="a" style="left:1195px;top:88px;width:1.5px;height:466px;background:#c8cacb"></div>
<div class="a" style="left:1196.5px;top:88px;width:3.5px;height:466px;background:#dcdddd"></div>
<!-- ZOOM PANEL -->
<div class="a" style="left:1148.5px;top:330px;width:33.5px;height:140px;background:#e6e6e6;border-radius:0 0 4px 4px;box-shadow:0 1px 2px rgba(0,0,0,0.12)"></div>
<div class="a" style="left:1160px;top:369.3px;width:11px;height:1.4px;background:#56646a"></div>
<div class="a" style="left:1164.8px;top:364.5px;width:1.4px;height:11px;background:#56646a"></div>
<div class="a" style="left:1160px;top:396px;width:11px;height:1.4px;background:#56646a"></div>
<div class="t b" style="left:1148.5px;width:33.5px;text-align:center;top:420px;font-size:10px;color:#1e282d">80%</div>
<div class="a" style="left:1148.5px;top:440px;width:33.5px;height:1px;background:#d5d9da"></div>
<svg style="left:1159px;top:449px" width="12" height="12" viewBox="0 0 12 12"><path d="M1.5 10.5 L10.5 1.5 M6.5 1.5 H10.5 V5.5 M1.5 6.5 V10.5 H5.5" stroke="#56646a" stroke-width="1.3" fill="none"/></svg>
<div class="a" style="left:1098px;top:514.5px;width:86.5px;height:34px;background:#1bb2b9;border-radius:16px"></div>
<div class="t b" style="left:1098px;width:86.5px;text-align:center;top:525.5px;font-size:12.2px;color:#f2fbfb">Contact Us</div>
<svg style="left:1053px;top:533px" width="12" height="16" viewBox="0 0 12 16"><path d="M0.8 1.5 C0.8 1.1 1.1 0.8 1.5 0.8 H7.5 L11.2 4.5 V14.5 C11.2 14.9 10.9 15.2 10.5 15.2 H1.5 C1.1 15.2 0.8 14.9 0.8 14.5 Z M7.5 0.8 V4.5 H11.2 M6 6.5 V12.5 M3 9.5 H9" stroke="#56646a" stroke-width="1.2" fill="none"/></svg>
<div class="a" style="left:352px;top:276.5px;width:0;height:0"></div>
<svg style="left:351px;top:276px" width="22" height="52" viewBox="0 0 22 52"><path d="M0 0 L21 12.5 V37 L0 51 Z" fill="#e6e6e6"/><path d="M14 20.8 L7.4 26 L14 31" fill="#1e282d"/></svg>

<!-- POPUP -->
<div class="a" style="left:799px;top:44.5px;width:393px;height:316px;background:#fff;border-radius:6px;box-shadow:0 2px 6px rgba(0,0,0,0.16)"></div>
<div class="t" style="left:813px;top:62px;font-size:16.4px;color:#1e282d">Share your design</div>


<div class="t b" style="left:854px;top:101px;font-size:11.6px;color:#1e282d">Public on the web</div>
<div class="t" style="left:854px;top:122px;font-size:11px;color:#6a8591">Anyone with the link can view this visual</div>
<div class="a" style="left:1133.5px;top:104px;width:47.5px;height:23px;background:#13b4bb;border-radius:12px;box-shadow:inset 0 0 0 1px #0f9ea5"></div>
<div class="a" style="left:1160px;top:105.5px;width:20px;height:20px;background:#fff;border-radius:50%"></div>

<div class="a" style="left:813px;top:145px;width:367px;height:84px;background:#eef0f1;border-radius:3px"></div>
<div class="t" style="left:823px;top:160.5px;font-size:10.8px;color:#323d42">Embed code</div>
<div class="t b" style="left:1119px;top:161px;font-size:10.2px;color:#111">View code</div>
<div class="a" style="left:823px;top:186.5px;width:347px;height:1px;background:#d9dfdf"></div>
<div class="t" style="left:823px;top:203px;font-size:10.6px;color:#323d42">Social share</div>
<svg style="left:1024px;top:202px" width="9" height="13" viewBox="0 0 9 13"><path d="M5.8 13 V7.2 H7.8 L8.1 5 H5.8 V3.6 C5.8 3 6 2.5 6.9 2.5 H8.2 V0.5 C7.9 0.5 7.2 0.4 6.3 0.4 C4.4 0.4 3.2 1.5 3.2 3.5 V5 H1.1 V7.2 H3.2 V13 Z" fill="#3b5998"/></svg>
<svg style="left:1053.5px;top:203px" width="13" height="11" viewBox="0 0 24 20"><path d="M23.6 2.4 C22.7 2.8 21.8 3 20.8 3.1 C21.8 2.5 22.6 1.6 22.9 0.4 C22 1 21 1.4 19.9 1.6 C19 0.6 17.7 0 16.3 0 C13.6 0 11.4 2.2 11.4 4.9 C11.4 5.3 11.5 5.7 11.5 6 C7.4 5.8 3.8 3.9 1.4 0.9 C1 1.6 0.7 2.5 0.7 3.4 C0.7 5.1 1.6 6.6 2.9 7.5 C2.1 7.5 1.3 7.2 0.7 6.9 V6.9 C0.7 9.3 2.4 11.3 4.6 11.7 C4.2 11.8 3.8 11.9 3.3 11.9 C3 11.9 2.7 11.9 2.4 11.8 C3 13.8 4.9 15.2 7 15.2 C5.3 16.5 3.2 17.3 0.9 17.3 C0.5 17.3 0.2 17.3 -0.2 17.2 C2 18.6 4.6 19.4 7.4 19.4 C16.3 19.4 21.2 12 21.2 5.5 V4.9 C22.2 4.2 23 3.3 23.6 2.4 Z" fill="#1da1f2"/></svg>
<svg style="left:1085px;top:202px" width="13" height="13" viewBox="0 0 13 13"><path d="M11.3 5.4 H6.6 V7.5 H9.4 C9 8.9 7.9 9.8 6.5 9.8 C4.6 9.8 3.1 8.3 3.1 6.5 C3.1 4.6 4.6 3.1 6.5 3.1 C7.3 3.1 8.1 3.4 8.7 3.9 L10.2 2.4 C9.2 1.5 7.9 0.9 6.5 0.9 C3.4 0.9 0.9 3.4 0.9 6.5 C0.9 9.6 3.4 12.1 6.5 12.1 C9.6 12.1 11.9 9.8 11.9 6.6 C11.9 6.2 11.8 5.8 11.7 5.4 Z" fill="#d3221c" stroke="#d3221c" stroke-width="0.5"/></svg>
<svg style="left:1117.5px;top:202px" width="13" height="13" viewBox="0 0 24 24"><path d="M12 0 C5.4 0 0 5.4 0 12 C0 17.1 3.2 21.4 7.6 23.2 C7.5 22.2 7.4 20.8 7.7 19.7 L9.1 13.7 C9.1 13.7 8.7 13 8.7 11.9 C8.7 10.2 9.7 9 10.9 9 C11.9 9 12.4 9.8 12.4 10.7 C12.4 11.7 11.7 13.3 11.4 14.7 C11.1 15.9 12 16.9 13.2 16.9 C15.3 16.9 17 14.6 17 11.3 C17 8.4 14.9 6.4 12 6.4 C8.6 6.4 6.6 8.9 6.6 11.6 C6.6 12.6 7 13.7 7.5 14.3 C7.6 14.4 7.6 14.5 7.6 14.7 L7.2 16.1 C7.2 16.3 7 16.4 6.8 16.3 C5.3 15.6 4.4 13.4 4.4 11.6 C4.4 7.7 7.2 4.1 12.6 4.1 C16.9 4.1 20.2 7.2 20.2 11.2 C20.2 15.5 17.5 19 13.8 19 C12.5 19 11.3 18.3 10.9 17.5 L10.1 20.4 C9.8 21.5 9.1 22.8 8.6 23.6 C9.7 23.9 10.8 24 12 24 C18.6 24 24 18.6 24 12 C24 5.4 18.6 0 12 0 Z" fill="#d0202a"/></svg>
<div class="t b" style="left:1150.5px;top:204px;font-size:10.5px;color:#0f6fa8;letter-spacing:-0.2px;-webkit-text-stroke:0.3px #0f6fa8">in</div>

<svg style="left:824px;top:254px" width="18" height="21" viewBox="0 0 18 21"><path d="M4.2 9 V6 C4.2 3 6.3 0.9 9 0.9 C11.7 0.9 13.8 3 13.8 6 V9" stroke="#17b4bc" stroke-width="1.5" fill="none"/><rect x="0.8" y="9" width="16.4" height="11" rx="2.2" stroke="#17b4bc" stroke-width="1.5" fill="none"/></svg>
<div class="t b" style="left:854px;top:250.3px;font-size:11.5px;color:#1e282d">Privately with password</div>
<div class="a" style="left:992px;top:248.5px;width:51px;height:16.5px;background:#f0466e;border-radius:3px"></div>
<div class="t b" style="left:997px;top:252.5px;font-size:8.3px;color:#fff">UPGRADE</div>
<div class="t" style="left:854px;top:272px;font-size:10.95px;color:#6a8591">Only those with password can view the visual</div>
<div class="a" style="left:1134.5px;top:255.5px;width:45.5px;height:20px;background:#fff;border:1px solid #d8dcdd;border-radius:11px"></div>

<div class="a" style="left:799px;top:312px;width:393px;height:48.5px;background:#f5f6f6;border-radius:0 0 6px 6px"></div>
<div class="a" style="left:1093px;top:322px;width:87px;height:28.5px;background:#f5f6f6;border:1px solid #d6dadc;border-radius:4px"></div>
<svg style="left:1103.5px;top:330.5px" width="11.5" height="11.5" viewBox="0 0 12 12"><path d="M5 7 L7 5" stroke="#1e282d" stroke-width="1.3"/><path d="M4.6 4.2 L6.4 2.4 C7.3 1.5 8.7 1.5 9.6 2.4 C10.5 3.3 10.5 4.7 9.6 5.6 L7.8 7.4" stroke="#1e282d" stroke-width="1.3" fill="none"/><path d="M7.4 7.8 L5.6 9.6 C4.7 10.5 3.3 10.5 2.4 9.6 C1.5 8.7 1.5 7.3 2.4 6.4 L4.2 4.6" stroke="#1e282d" stroke-width="1.3" fill="none"/></svg>
<div class="t b" style="left:1120.5px;top:332px;font-size:10.1px;color:#1e282d">Copy Link</div>

<!-- RED OUTLINE -->
<div class="a" style="left:740.3px;top:3.5px;width:454.7px;height:365.3px;border:2.7px solid #f81a06;border-radius:10px;box-shadow:0 0 0 0.7px rgba(235,250,250,0.6), inset 0 0 0 0.7px rgba(235,250,250,0.6)"></div>

</body></html>
